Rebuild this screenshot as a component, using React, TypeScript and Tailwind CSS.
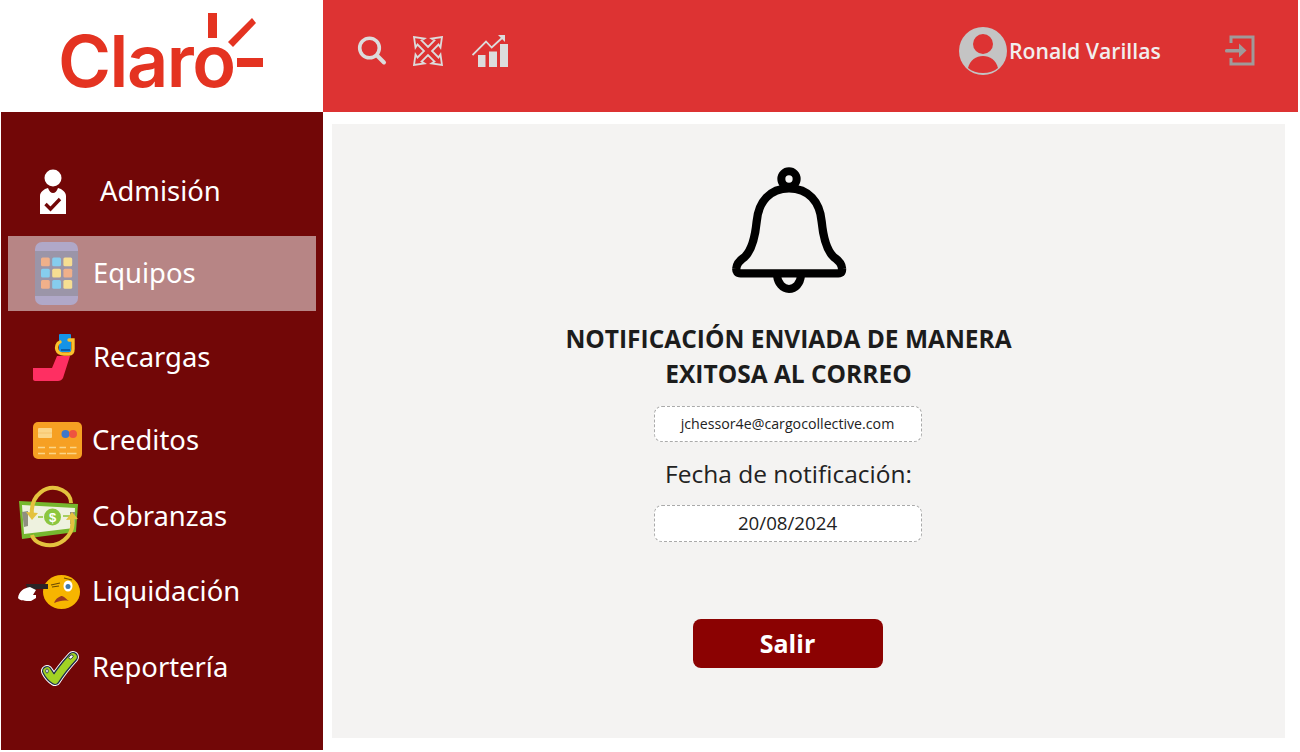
import { ReactNode } from 'react';

const AdmisionIcon = () => (
  <svg viewBox="38 167 30 48" className="w-[30px] h-[48px] ml-[30px] shrink-0">
    <circle cx="53" cy="177" r="8.5" fill="#fff" />
    <path d="M40 213V195C40 191 44 188 48 187C49 190 51 192 53 192C55 192 57 190 58 187C62 188 66 191 66 195V213Z" fill="#fff" />
    <path d="M45.5 203L50.5 208L60 198" fill="none" stroke="#720707" strokeWidth="3.4" />
  </svg>
);

const EquiposIcon = () => {
  const keys = [
    ['#f0b08a', '#86cdee', '#f6de92'],
    ['#86cdee', '#f6de92', '#f0b08a'],
    ['#f0b08a', '#86cdee', '#f6de92'],
  ];
  return (
    <svg viewBox="35 243 44 63" className="w-[44px] h-[63px] ml-[27px] shrink-0">
      <rect x="35" y="243" width="43" height="63" rx="7" fill="#b0a8c8" />
      <rect x="35" y="252" width="43" height="45" fill="#9b95a8" />
      {keys.map((row, r) =>
        row.map((color, c) => (
          <rect key={`${r}-${c}`} x={41 + c * 11.2} y={258.5 + r * 11.2} width="8.8" height="8.8" rx="1.5" fill={color} />
        ))
      )}
    </svg>
  );
};

const RecargasIcon = () => (
  <svg viewBox="33 333 42 49" className="w-[42px] h-[49px] ml-[25px] shrink-0">
    <path d="M33 368H52L57 356H70L63 378C62 380 60 381 58 381H35C34 381 33 380 33 379Z" fill="#fe2f62" />
    <rect x="59" y="334" width="12" height="18" rx="1" fill="#1593e6" />
    <rect x="61" y="349" width="9" height="2" fill="#0d5ea8" />
    <path d="M60 342C57 343 56 347 57 350C58 353 60 354 64 354H69C72 354 73 352 73 349V340H69" fill="none" stroke="#fac12d" strokeWidth="3.4" strokeLinecap="round" />
  </svg>
);

const CreditosIcon = () => (
  <svg viewBox="33 421 49 37" className="w-[49px] h-[37px] ml-[25px] shrink-0">
    <rect x="33" y="421" width="49" height="37" rx="5" fill="#f6a023" />
    <rect x="38" y="427" width="14" height="10" rx="1" fill="#fbd587" />
    <line x1="38" y1="432" x2="52" y2="432" stroke="#f6c36a" strokeWidth="1" />
    <circle cx="65.5" cy="433" r="4" fill="#3f78c9" />
    <circle cx="73" cy="433" r="4" fill="#ee5340" />
    <path d="M38 446.500H45M49 446.500H56M59.500 446.500H66M70 446.500H76.500" stroke="#fbd587" strokeWidth="1.700" />
    <path d="M38 452.500H45M49 452.500H56M59.500 452.500H66M67 452.500H76.500" stroke="#fbd587" strokeWidth="1.700" />
  </svg>
);

const CobranzasIcon = () => (
  <svg viewBox="18 484 62 63" className="w-[62px] h-[63px] ml-[10px] shrink-0">
    <path d="M19 500L78 503L76 531L22 538Z" fill="#76b82e" />
    <path d="M22 504L75 507L74 527L24 533Z" fill="#eef2df" />
    <path d="M22 511L28 510V525L24 526ZM75 511L70 511V523L74 523Z" fill="#8f8f80" />
    <path d="M38 516H43M63 515H70" stroke="#a6ce60" strokeWidth="2" />
    <circle cx="52.500" cy="516" r="8.500" fill="#8cc63f" />
    <text x="52.500" y="521" fontSize="13" fontWeight="700" textAnchor="middle" fill="#fff" fontFamily="Liberation Sans, sans-serif">$</text>
    <path d="M32 514C30 494 47 482 62 489C68 492 71 497 71 502" fill="none" stroke="#e4c23e" strokeWidth="4" />
    <path d="M72 518C75 536 58 548 42 543C36 541 33 538 32 534" fill="none" stroke="#e4c23e" strokeWidth="4" />
    <path d="M26 511L38 512L32 519Z" fill="#e4c23e" />
    <path d="M66 519L78 518L72 511Z" fill="#e4c23e" />
  </svg>
);

const LiquidacionIcon = () => (
  <svg viewBox="17 573 64 36" className="w-[64px] h-[36px] ml-[9px] shrink-0">
    <ellipse cx="61.500" cy="591" rx="18.500" ry="17" fill="#f7b500" />
    <path d="M26 583H48V588H36L33 592H28Z" fill="#2a2426" />
    <path d="M18 597C19 590 24 587 30 586L36 589L33 594H36V597L31 600C25 600 20 600 18 597Z" fill="#fff" />
    <ellipse cx="68" cy="585" rx="4.500" ry="5.500" fill="#fff" />
    <circle cx="68" cy="585.500" r="2.500" fill="#3e78ac" />
    <path d="M51 584L60 582M52 586L59 585M64 577L72 579" stroke="#6b4a00" strokeWidth="1.200" fill="none" />
    <path d="M54 602C56 597 60 595 62 595C65 596 67 599 69 600C64 599 59 600 54 602Z" fill="#9c3a20" />
  </svg>
);

const ReporteriaIcon = () => {
  const d = 'M47 670Q50 676 55 679Q62 668 73 656';
  return (
    <svg viewBox="40 648 41 38" className="w-[41px] h-[38px] ml-[32px] shrink-0">
      <path d={d} fill="none" stroke="#fff" strokeWidth="12" strokeLinecap="round" strokeLinejoin="round" />
      <path d={d} fill="none" stroke="#1c2a4a" strokeWidth="10" strokeLinecap="round" strokeLinejoin="round" />
      <path d={d} fill="none" stroke="#a2d324" strokeWidth="7.500" strokeLinecap="round" strokeLinejoin="round" />
      <ellipse cx="71" cy="656" rx="2.500" ry="1.500" fill="#fff" stroke="#1c2a4a" strokeWidth="0.800" transform="rotate(-40 71 656)" />
      <ellipse cx="47" cy="670" rx="1.300" ry="2" fill="#fff" stroke="#1c2a4a" strokeWidth="0.800" />
    </svg>
  );
};

const menu: { label: string; icon: ReactNode; gap: string; row: string }[] = [
  { label: 'Admisión', icon: <AdmisionIcon />, gap: 'ml-[32px]', row: '' },
  { label: 'Equipos', icon: <EquiposIcon />, gap: 'ml-[14px]', row: 'mt-[7px] bg-[#b78585]' },
  { label: 'Recargas', icon: <RecargasIcon />, gap: 'ml-[18px]', row: 'mt-[9px]' },
  { label: 'Creditos', icon: <CreditosIcon />, gap: 'ml-[10px]', row: 'mt-[8px]' },
  { label: 'Cobranzas', icon: <CobranzasIcon />, gap: 'ml-[12px]', row: 'mt-px' },
  { label: 'Liquidación', icon: <LiquidacionIcon />, gap: 'ml-[11px]', row: '' },
  { label: 'Reportería', icon: <ReporteriaIcon />, gap: 'ml-[11px]', row: 'mt-px' },
];

function ClaroLogo() {
  return (
    <div className="relative w-[322px] h-[112px] bg-white shrink-0">
      <span className="absolute left-[57px] top-[19px] text-[72px] leading-[84px] tracking-[-1.5px] font-semibold text-[#e43321] [font-family:Inter,sans-serif]">
        Claro
      </span>
      <svg viewBox="0 0 322 112" className="absolute inset-0 w-[322px] h-[112px]">
        <rect x="207" y="13" width="9" height="25" fill="#e43321" />
        <path d="M227 42L251 18L255 23L232 47Z" fill="#e43321" />
        <rect x="236" y="58" width="26" height="9" fill="#e43321" />
      </svg>
    </div>
  );
}

function Header() {
  return (
    <header className="flex-1 h-[112px] bg-[#dd3333] flex items-center pl-[34px] pr-[43px] pb-[10px]">
      <svg viewBox="357 36 30 30" className="w-[30px] h-[30px]">
        <circle cx="369.500" cy="48" r="9.800" fill="none" stroke="#dcdcdc" strokeWidth="3.600" />
        <path d="M377 55.500L384 62.500" stroke="#dcdcdc" strokeWidth="4" strokeLinecap="round" />
      </svg>
      <svg viewBox="0 0 30 30" className="w-[30px] h-[30px] ml-[26px]">
        <path
          d="M15 11L21.500 4.500L18.500 2.500L29 1L27.500 11.500L25.500 8.500L19 15L25.500 21.500L27.500 18.500L29 29L18.500 27.500L21.500 25.500L15 19L8.500 25.500L11.500 27.500L1 29L2.500 18.500L4.500 21.500L11 15L4.500 8.500L2.500 11.500L1 1L11.500 2.500L8.500 4.500Z"
          fill="none"
          stroke="#dcdcdc"
          strokeWidth="1.800"
        />
      </svg>
      <svg viewBox="472 34 38 34" className="w-[38px] h-[34px] ml-[29px]">
        <rect x="478" y="55" width="7.500" height="12" fill="#dcdcdc" />
        <rect x="489" y="51.500" width="8" height="15.500" fill="#dcdcdc" />
        <rect x="500" y="44" width="8" height="23" fill="#dcdcdc" />
        <path d="M472.500 55L486 41.500L491.700 47.500L502 38" fill="none" stroke="#dcdcdc" strokeWidth="1.800" />
        <path d="M498 35H505V42Z" fill="#dcdcdc" />
      </svg>
      <svg viewBox="959 27 48 48" className="w-[48px] h-[48px] ml-auto">
        <circle cx="983" cy="51" r="24" fill="#c4c4c4" />
        <circle cx="983" cy="44" r="10" fill="#dd3333" />
        <path d="M968 68C970 60 976 56 983 56C990 56 996 60 998 68C994 71.500 989 73 983 73C977 73 972 71.500 968 68Z" fill="#dd3333" />
      </svg>
      <span className="ml-[2px] w-[216px] text-[21.2px] leading-[28px] font-semibold text-[#f1eeee] [font-family:'Open_Sans',sans-serif]">
        Ronald Varillas
      </span>
      <svg viewBox="1225 35 31 32" className="w-[31px] h-[32px] mr-[-1px]">
        <path d="M1231 43V37H1253V64H1231V58" fill="none" stroke="#a09a9a" strokeWidth="3" />
        <rect x="1225" y="49" width="15" height="3.500" rx="1.500" fill="#a09a9a" />
        <path d="M1239 43.500L1246.500 50.500L1239 57.500Z" fill="#a09a9a" />
      </svg>
    </header>
  );
}

function Sidebar() {
  return (
    <aside className="w-[322px] h-[638px] bg-[#720707] shrink-0 pt-[42px] pl-[7px] pr-[7px] text-[27.4px] text-white [font-family:'Noto_Sans',sans-serif]">
      {menu.map((item) => (
        <div key={item.label} className={`flex items-center h-[75px] ${item.row}`}>
          {item.icon}
          <span className={`pb-[2px] ${item.gap}`}>{item.label}</span>
        </div>
      ))}
    </aside>
  );
}

function BellIcon() {
  return (
    <svg viewBox="0 0 480 450" className="w-[160px] h-[150px] mt-[31px] ml-[2px] shrink-0">
      <circle cx="237" cy="72" r="23" fill="none" stroke="#000" strokeWidth="24" />
      <path
        d="M92 355H385C395 355 397 350 396 340C395 325 385 315 370 305C350 285 340 250 335 200C330 140 295 100 237 100C180 100 145 140 140 200C135 250 125 285 105 305C90 315 80 325 79 340C78 350 82 355 92 355Z"
        fill="none"
        stroke="#000"
        strokeWidth="25"
        strokeLinejoin="round"
      />
      <path d="M201 362C204 385 218 402 237 402C256 402 271 385 273 362" fill="none" stroke="#000" strokeWidth="24" />
    </svg>
  );
}

function ValueBox({ value, className }: { value: string; className: string }) {
  return (
    <div className={`w-[268px] h-[36px] mr-[2px] bg-white rounded-[8px] border border-dashed border-[#aaaaaa] flex items-center justify-center text-[#222] ${className}`}>
      {value}
    </div>
  );
}

export default function App() {
  return (
    <div className="w-[1300px] h-[752px] bg-white pl-px pr-[2px] overflow-hidden [font-family:'Open_Sans',sans-serif]">
      <div className="flex">
        <ClaroLogo />
        <Header />
      </div>
      <div className="flex">
        <Sidebar />
        <main className="w-[953px] h-[614px] mt-[12px] ml-[9px] bg-[#f4f3f2] flex flex-col items-center pr-[40px]">
          <BellIcon />
          <h1 className="mt-[16px] w-[480px] text-center text-[24.5px] leading-[35px] font-bold text-[#1c1c1c]">
            NOTIFICACIÓN ENVIADA DE MANERA
            <br />
            EXITOSA AL CORREO
          </h1>
          <ValueBox value="jchessor4e@cargocollective.com" className="mt-[15px] text-[14.2px]" />
          <p className="mt-[15px] text-[24.5px] leading-[33px] text-[#222]">Fecha de notificación:</p>
          <ValueBox value="20/08/2024" className="mt-[15px] h-[37px] text-[18.7px]" />
          <button className="mt-[77px] mr-[2px] w-[190px] h-[49px] rounded-[8px] bg-[#8b0202] text-white text-[25px] font-bold">
            Salir
          </button>
        </main>
      </div>
    </div>
  );
}
